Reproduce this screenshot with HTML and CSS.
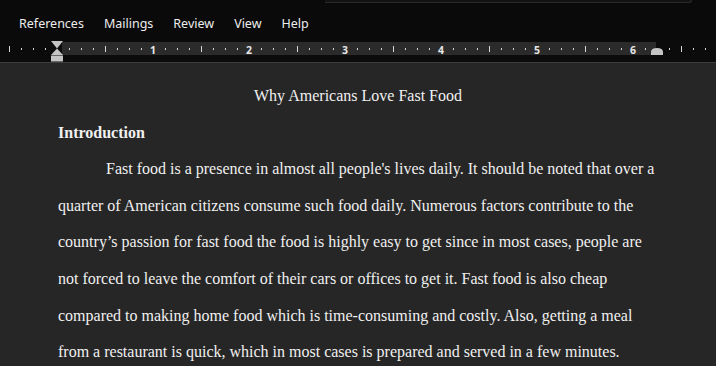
FILE: index.html
```html
<!DOCTYPE html>
<html lang="en">
<head>
    <meta charset="UTF-8">
    <title>Why Americans Love Fast Food - Word</title>
    <link rel="stylesheet" href="styles.css">
</head>
<body>
    <div class="top">
        <div class="search-edge"></div>
        <div class="tabs">
            <span class="tab">References</span>
            <span class="tab">Mailings</span>
            <span class="tab">Review</span>
            <span class="tab">View</span>
            <span class="tab">Help</span>
        </div>
    </div>

    <!-- ruler: one inch = 96px, origin at x=57 -->
    <div class="ruler">
        <svg width="716" height="22" viewBox="0 0 716 22">
            <defs>
                <pattern id="ticks" x="57" y="0" width="96" height="22" patternUnits="userSpaceOnUse">
                    <rect x="12" y="8" width="1" height="2" fill="#d6d6d6"/>
                    <rect x="24" y="8" width="1" height="2" fill="#d6d6d6"/>
                    <rect x="36" y="8" width="1" height="2" fill="#d6d6d6"/>
                    <rect x="48" y="6" width="1" height="6" fill="#d6d6d6"/>
                    <rect x="60" y="8" width="1" height="2" fill="#d6d6d6"/>
                    <rect x="72" y="8" width="1" height="2" fill="#d6d6d6"/>
                    <rect x="84" y="8" width="1" height="2" fill="#d6d6d6"/>
                </pattern>
            </defs>
            <rect x="62" y="2" width="594" height="13" fill="#2b2b2b"/>
            <rect x="0" y="0" width="716" height="22" fill="url(#ticks)"/>
            <g class="nums">
                <text x="153" y="13.5">1</text>
                <text x="249" y="13.5">2</text>
                <text x="345" y="13.5">3</text>
                <text x="441" y="13.5">4</text>
                <text x="537" y="13.5">5</text>
                <text x="633" y="13.5">6</text>
            </g>
            <!-- left indent -->
            <path d="M51 1 H63 L57 8.5 Z" fill="#c4c4c4"/>
            <path d="M57 8.5 L63 15 H51 Z" fill="#c4c4c4"/>
            <rect x="51" y="15.5" width="12" height="6" fill="#c4c4c4"/>
            <!-- right indent -->
            <path d="M651 15 V12 Q651 8 657 8 Q663 8 663 12 V15 Z" fill="#c4c4c4"/>
        </svg>
    </div>

    <div class="doc">
        <p class="title">Why Americans Love Fast Food</p>
        <p class="heading">Introduction</p>
        <p class="line indent">Fast food is a presence in almost all people's lives daily. It should be noted that over a</p>
        <p class="line">quarter of American citizens consume such food daily. Numerous factors contribute to the</p>
        <p class="line">country’s passion for fast food the food is highly easy to get since in most cases, people are</p>
        <p class="line">not forced to leave the comfort of their cars or offices to get it. Fast food is also cheap</p>
        <p class="line">compared to making home food which is time-consuming and costly. Also, getting a meal</p>
        <p class="line">from a restaurant is quick, which in most cases is prepared and served in a few minutes.</p>
    </div>
</body>
</html>
```

FILE: styles.css
```css
body {
    margin: 0;
    background: #262626;
    width: 716px;
    height: 366px;
    overflow: hidden;
}

.top {
    background: #0a0a0a;
    height: 40px;
    font-family: "Noto Sans", "Open Sans", sans-serif;
}

.search-edge {
    margin-left: 325px;
    width: 366px;
    height: 2px;
    background: #121212;
    border-bottom: 1px solid #2a2a2a;
    border-right: 1px solid #2a2a2a;
    border-bottom-right-radius: 4px;
}

.tabs {
    display: flex;
    gap: 20px;
    padding: 8px 0 0 19px;
}

.tab {
    color: #ededed;
    font-size: 12.5px;
    line-height: 26px;
}

.ruler {
    background: #0b0b0b;
    height: 22px;
    border-bottom: 1px solid #3e3e3e;
}

.ruler svg {
    display: block;
}

.nums text {
    fill: #e6e6e6;
    font-family: "Noto Sans", sans-serif;
    font-size: 10.5px;
    font-weight: bold;
    text-anchor: middle;
}

.doc {
    padding: 15px 0 0 58px;
    font-family: "Liberation Serif", "Times New Roman", serif;
    font-size: 16px;
    line-height: 36.6px;
    color: #f0f0f0;
}

.doc p {
    margin: 0;
    white-space: nowrap;
}

.title {
    width: 600px;
    text-align: center;
}

.heading {
    font-weight: bold;
}

.indent {
    text-indent: 48px;
}
```
